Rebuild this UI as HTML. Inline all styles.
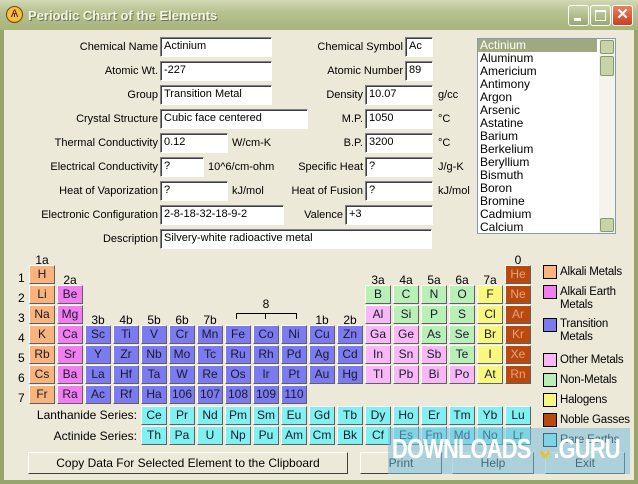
<!DOCTYPE html>
<html><head><meta charset="utf-8"><style>
*{margin:0;padding:0;box-sizing:border-box}
body{width:638px;height:484px;overflow:hidden;background:#ece9d8;font-family:"Liberation Sans",sans-serif;font-size:11px;color:#000;position:relative}
.a{position:absolute}
#tb{left:0;top:0;width:638px;height:30px;background:linear-gradient(#d2d9b6,#b6c290 40%,#a7b47e);}
#bl{left:0;top:30px;width:4px;height:454px;background:#97a56d}
#br{right:0;top:30px;width:4px;height:454px;background:#97a56d}
#bb{left:0;bottom:0;width:638px;height:4px;background:#97a56d}
.t{font-weight:bold;font-size:13px;color:#f4f4e4;text-shadow:1px 1px 0 #6b7450;left:28px;top:8px}
.wb{top:5px;width:21px;height:21px;border:1px solid #fff;border-radius:3px;background:linear-gradient(#c8d4a8,#98a870)}
.lb{text-align:right;white-space:nowrap}
.in{background:#fff;border:1px solid;border-color:#808080 #fff #fff #808080;box-shadow:inset 1px 1px 0 #404040;height:20px;padding:2px 0 0 3px;white-space:nowrap}
.c{width:26px;height:19px;border:1px solid;border-color:#fff #606060 #606060 #fff;text-align:center;line-height:17px;font-size:12px;color:#1a1a2a}
.A{background:#f8b47c}.E{background:#f07ef0}.T{background:#7b7bef}.O{background:#f8b8f8}.N{background:#b8f0b8}.H{background:#f8f880}.G{background:#b84a10;color:#e8a080}.R{background:#80f0f0}
.g{font-size:12px;text-align:center;width:26px}
.lg{width:14px;height:14px;border:1px solid #000;left:543px}
.lt{left:560px;font-size:11.5px;line-height:13px;letter-spacing:-0.2px;white-space:nowrap}
.btn{height:22px;border:1px solid;border-color:#fff #404040 #404040 #fff;background:#ece9d8;text-align:center;line-height:20px;font-size:12px}
</style></head><body>
<div class="a" id="tb"></div>
<div class="a" style="left:6px;top:6px;width:17px;height:17px;border-radius:50%;background:#f0c040;border:1px solid #804000;color:#600;font-size:11px;text-align:center;line-height:15px">Ѧ</div>
<div class="a t">Periodic Chart of the Elements</div>
<div class="a wb" style="left:568px"><div class="a" style="left:5px;top:12px;width:7px;height:3px;background:#fff"></div></div>
<div class="a wb" style="left:590px"><div class="a" style="left:4px;top:4px;width:11px;height:11px;border:1px solid #fff;border-top-width:2px"></div></div>
<div class="a wb" style="left:612px;background:linear-gradient(#e88060,#c84020);color:#fff;font-weight:bold;font-size:15px;text-align:center;line-height:18px">✕</div>
<div class="a" id="bl"></div><div class="a" id="br"></div><div class="a" id="bb"></div>

<div class="a lb" style="right:480px;top:41px">Chemical Name</div><div class="a in" style="left:160px;top:37px;width:112px">Actinium</div>
<div class="a lb" style="right:480px;top:65px">Atomic Wt.</div><div class="a in" style="left:160px;top:61px;width:112px">-227</div>
<div class="a lb" style="right:480px;top:89px">Group</div><div class="a in" style="left:160px;top:85px;width:112px">Transition Metal</div>
<div class="a lb" style="right:480px;top:113px">Crystal Structure</div><div class="a in" style="left:160px;top:109px;width:148px">Cubic face centered</div>
<div class="a lb" style="right:480px;top:137px">Thermal Conductivity</div><div class="a in" style="left:160px;top:133px;width:68px">0.12</div><div class="a" style="left:232px;top:137px">W/cm-K</div>
<div class="a lb" style="right:480px;top:161px">Electrical Conductivity</div><div class="a in" style="left:160px;top:157px;width:44px">?</div><div class="a" style="left:208px;top:161px">10^6/cm-ohm</div>
<div class="a lb" style="right:480px;top:185px">Heat of Vaporization</div><div class="a in" style="left:160px;top:181px;width:68px">?</div><div class="a" style="left:232px;top:185px">kJ/mol</div>
<div class="a lb" style="right:480px;top:209px">Electronic Configuration</div><div class="a in" style="left:160px;top:205px;width:124px">2-8-18-32-18-9-2</div>
<div class="a lb" style="right:480px;top:233px">Description</div><div class="a in" style="left:160px;top:229px;width:272px">Silvery-white radioactive metal</div>

<div class="a lb" style="right:235px;top:41px">Chemical Symbol</div><div class="a in" style="left:405px;top:37px;width:28px">Ac</div>
<div class="a lb" style="right:235px;top:65px">Atomic Number</div><div class="a in" style="left:405px;top:61px;width:28px">89</div>
<div class="a lb" style="right:275px;top:89px">Density</div><div class="a in" style="left:365px;top:85px;width:68px">10.07</div><div class="a" style="left:438px;top:89px">g/cc</div>
<div class="a lb" style="right:275px;top:113px">M.P.</div><div class="a in" style="left:365px;top:109px;width:68px">1050</div><div class="a" style="left:438px;top:113px">°C</div>
<div class="a lb" style="right:275px;top:137px">B.P.</div><div class="a in" style="left:365px;top:133px;width:68px">3200</div><div class="a" style="left:438px;top:137px">°C</div>
<div class="a lb" style="right:275px;top:161px">Specific Heat</div><div class="a in" style="left:365px;top:157px;width:68px">?</div><div class="a" style="left:438px;top:161px">J/g-K</div>
<div class="a lb" style="right:275px;top:185px">Heat of Fusion</div><div class="a in" style="left:365px;top:181px;width:68px">?</div><div class="a" style="left:438px;top:185px">kJ/mol</div>
<div class="a lb" style="right:295px;top:209px">Valence</div><div class="a in" style="left:345px;top:205px;width:88px">+3</div>

<div class="a" style="left:477px;top:38px;width:139px;height:196px;background:#fff;border:1px solid #7f9db9;font-size:12px;line-height:13px">
<div style="background:#a0a880;color:#fff;padding-left:2px;width:119px">Actinium</div>
<div style="padding-left:2px">Aluminum<br>Americium<br>Antimony<br>Argon<br>Arsenic<br>Astatine<br>Barium<br>Berkelium<br>Beryllium<br>Bismuth<br>Boron<br>Bromine<br>Cadmium<br>Calcium</div>
<div class="a" style="right:0;top:0;width:16px;height:194px;background:#f4f4ec"></div>
<div class="a" style="right:1px;top:1px;width:14px;height:14px;background:#c8d4a8;border:1px solid #8a9a68;border-radius:2px"></div>
<div class="a" style="right:1px;top:17px;width:14px;height:20px;background:#c8d4a8;border:1px solid #8a9a68;border-radius:2px"></div>
<div class="a" style="right:1px;bottom:1px;width:14px;height:14px;background:#c8d4a8;border:1px solid #8a9a68;border-radius:2px"></div>
</div>

<div class="a" style="left:18px;top:268px;font-size:12px;line-height:20px">1<br>2<br>3<br>4<br>5<br>6<br>7</div>
<div class="a g" style="left:29px;top:253px">1a</div>
<div class="a g" style="left:57px;top:273px">2a</div>
<div class="a g" style="left:85px;top:313px">3b</div><div class="a g" style="left:113px;top:313px">4b</div><div class="a g" style="left:141px;top:313px">5b</div><div class="a g" style="left:169px;top:313px">6b</div><div class="a g" style="left:197px;top:313px">7b</div>
<div class="a g" style="left:253px;top:297px">8</div>
<div class="a" style="left:236px;top:313px;width:61px;height:6px;border:1px solid #000;border-bottom:none"></div><div class="a" style="left:265px;top:313px;width:1px;height:6px;background:#000"></div>
<div class="a g" style="left:309px;top:313px">1b</div><div class="a g" style="left:337px;top:313px">2b</div>
<div class="a g" style="left:365px;top:273px">3a</div><div class="a g" style="left:393px;top:273px">4a</div><div class="a g" style="left:421px;top:273px">5a</div><div class="a g" style="left:449px;top:273px">6a</div><div class="a g" style="left:477px;top:273px">7a</div>
<div class="a g" style="left:505px;top:253px">0</div>

<div class="a c A" style="left:29px;top:265px">H</div><div class="a c G" style="left:505px;top:265px">He</div>
<div class="a c A" style="left:29px;top:285px">Li</div><div class="a c E" style="left:57px;top:285px">Be</div><div class="a c N" style="left:365px;top:285px">B</div><div class="a c N" style="left:393px;top:285px">C</div><div class="a c N" style="left:421px;top:285px">N</div><div class="a c N" style="left:449px;top:285px">O</div><div class="a c H" style="left:477px;top:285px">F</div><div class="a c G" style="left:505px;top:285px">Ne</div>
<div class="a c A" style="left:29px;top:305px">Na</div><div class="a c E" style="left:57px;top:305px">Mg</div><div class="a c O" style="left:365px;top:305px">Al</div><div class="a c N" style="left:393px;top:305px">Si</div><div class="a c N" style="left:421px;top:305px">P</div><div class="a c N" style="left:449px;top:305px">S</div><div class="a c H" style="left:477px;top:305px">Cl</div><div class="a c G" style="left:505px;top:305px">Ar</div>
<div class="a c A" style="left:29px;top:325px">K</div><div class="a c E" style="left:57px;top:325px">Ca</div><div class="a c T" style="left:85px;top:325px">Sc</div><div class="a c T" style="left:113px;top:325px">Ti</div><div class="a c T" style="left:141px;top:325px">V</div><div class="a c T" style="left:169px;top:325px">Cr</div><div class="a c T" style="left:197px;top:325px">Mn</div><div class="a c T" style="left:225px;top:325px">Fe</div><div class="a c T" style="left:253px;top:325px">Co</div><div class="a c T" style="left:281px;top:325px">Ni</div><div class="a c T" style="left:309px;top:325px">Cu</div><div class="a c T" style="left:337px;top:325px">Zn</div><div class="a c O" style="left:365px;top:325px">Ga</div><div class="a c O" style="left:393px;top:325px">Ge</div><div class="a c N" style="left:421px;top:325px">As</div><div class="a c N" style="left:449px;top:325px">Se</div><div class="a c H" style="left:477px;top:325px">Br</div><div class="a c G" style="left:505px;top:325px">Kr</div>
<div class="a c A" style="left:29px;top:345px">Rb</div><div class="a c E" style="left:57px;top:345px">Sr</div><div class="a c T" style="left:85px;top:345px">Y</div><div class="a c T" style="left:113px;top:345px">Zr</div><div class="a c T" style="left:141px;top:345px">Nb</div><div class="a c T" style="left:169px;top:345px">Mo</div><div class="a c T" style="left:197px;top:345px">Tc</div><div class="a c T" style="left:225px;top:345px">Ru</div><div class="a c T" style="left:253px;top:345px">Rh</div><div class="a c T" style="left:281px;top:345px">Pd</div><div class="a c T" style="left:309px;top:345px">Ag</div><div class="a c T" style="left:337px;top:345px">Cd</div><div class="a c O" style="left:365px;top:345px">In</div><div class="a c O" style="left:393px;top:345px">Sn</div><div class="a c O" style="left:421px;top:345px">Sb</div><div class="a c N" style="left:449px;top:345px">Te</div><div class="a c H" style="left:477px;top:345px">I</div><div class="a c G" style="left:505px;top:345px">Xe</div>
<div class="a c A" style="left:29px;top:365px">Cs</div><div class="a c E" style="left:57px;top:365px">Ba</div><div class="a c T" style="left:85px;top:365px">La</div><div class="a c T" style="left:113px;top:365px">Hf</div><div class="a c T" style="left:141px;top:365px">Ta</div><div class="a c T" style="left:169px;top:365px">W</div><div class="a c T" style="left:197px;top:365px">Re</div><div class="a c T" style="left:225px;top:365px">Os</div><div class="a c T" style="left:253px;top:365px">Ir</div><div class="a c T" style="left:281px;top:365px">Pt</div><div class="a c T" style="left:309px;top:365px">Au</div><div class="a c T" style="left:337px;top:365px">Hg</div><div class="a c O" style="left:365px;top:365px">Tl</div><div class="a c O" style="left:393px;top:365px">Pb</div><div class="a c O" style="left:421px;top:365px">Bi</div><div class="a c O" style="left:449px;top:365px">Po</div><div class="a c H" style="left:477px;top:365px">At</div><div class="a c G" style="left:505px;top:365px">Rn</div>
<div class="a c A" style="left:29px;top:385px">Fr</div><div class="a c E" style="left:57px;top:385px">Ra</div><div class="a c T" style="left:85px;top:385px">Ac</div><div class="a c T" style="left:113px;top:385px">Rf</div><div class="a c T" style="left:141px;top:385px">Ha</div><div class="a c T" style="left:169px;top:385px">106</div><div class="a c T" style="left:197px;top:385px">107</div><div class="a c T" style="left:225px;top:385px">108</div><div class="a c T" style="left:253px;top:385px">109</div><div class="a c T" style="left:281px;top:385px">110</div>

<div class="a lb" style="right:501px;top:408px;font-size:12px">Lanthanide Series:</div>
<div class="a lb" style="right:501px;top:429px;font-size:12px">Actinide Series:</div>
<div class="a c R" style="left:141px;top:406px">Ce</div><div class="a c R" style="left:169px;top:406px">Pr</div><div class="a c R" style="left:197px;top:406px">Nd</div><div class="a c R" style="left:225px;top:406px">Pm</div><div class="a c R" style="left:253px;top:406px">Sm</div><div class="a c R" style="left:281px;top:406px">Eu</div><div class="a c R" style="left:309px;top:406px">Gd</div><div class="a c R" style="left:337px;top:406px">Tb</div><div class="a c R" style="left:365px;top:406px">Dy</div><div class="a c R" style="left:393px;top:406px">Ho</div><div class="a c R" style="left:421px;top:406px">Er</div><div class="a c R" style="left:449px;top:406px">Tm</div><div class="a c R" style="left:477px;top:406px">Yb</div><div class="a c R" style="left:505px;top:406px">Lu</div>
<div class="a c R" style="left:141px;top:426px">Th</div><div class="a c R" style="left:169px;top:426px">Pa</div><div class="a c R" style="left:197px;top:426px">U</div><div class="a c R" style="left:225px;top:426px">Np</div><div class="a c R" style="left:253px;top:426px">Pu</div><div class="a c R" style="left:281px;top:426px">Am</div><div class="a c R" style="left:309px;top:426px">Cm</div><div class="a c R" style="left:337px;top:426px">Bk</div><div class="a c R" style="left:365px;top:426px">Cf</div><div class="a c R" style="left:393px;top:426px">Es</div><div class="a c R" style="left:421px;top:426px">Fm</div><div class="a c R" style="left:449px;top:426px">Md</div><div class="a c R" style="left:477px;top:426px">No</div><div class="a c R" style="left:505px;top:426px">Lr</div>

<div class="a lg A" style="top:265px"></div><div class="a lt" style="top:266px">Alkali Metals</div>
<div class="a lg E" style="top:285px"></div><div class="a lt" style="top:286px">Alkali Earth<br>Metals</div>
<div class="a lg T" style="top:318px"></div><div class="a lt" style="top:318px">Transition<br>Metals</div>
<div class="a lg O" style="top:353px"></div><div class="a lt" style="top:354px">Other Metals</div>
<div class="a lg N" style="top:373px"></div><div class="a lt" style="top:374px">Non-Metals</div>
<div class="a lg H" style="top:393px"></div><div class="a lt" style="top:394px">Halogens</div>
<div class="a lg G" style="top:413px"></div><div class="a lt" style="top:414px">Noble Gasses</div>
<div class="a lg R" style="top:433px"></div><div class="a lt" style="top:434px">Rare Earths</div>

<div class="a btn" style="left:28px;top:452px;width:320px">Copy Data For Selected Element to the Clipboard</div>
<div class="a btn" style="left:360px;top:452px;width:82px">Print</div>
<div class="a btn" style="left:452px;top:452px;width:82px">Help</div>
<div class="a btn" style="left:545px;top:452px;width:80px">Exit</div>

<div class="a" style="left:388px;top:428px;width:242px;height:46px;background:rgba(120,190,220,0.55)"></div>
<div class="a" style="left:392px;top:432px;font-size:28px;font-weight:bold;color:#fff;letter-spacing:-1px;transform:scaleX(0.78);transform-origin:left;white-space:nowrap">DOWNLOADS <span style="color:#f0c020">⌄</span>.GURU</div>
</body></html>
